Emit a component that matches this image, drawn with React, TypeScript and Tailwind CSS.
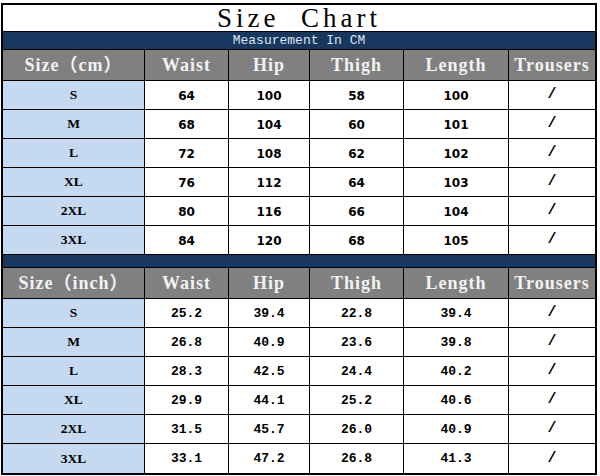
const cmRows = [
  ['S', '64', '100', '58', '100', '/'],
  ['M', '68', '104', '60', '101', '/'],
  ['L', '72', '108', '62', '102', '/'],
  ['XL', '76', '112', '64', '103', '/'],
  ['2XL', '80', '116', '66', '104', '/'],
  ['3XL', '84', '120', '68', '105', '/'],
];

const inchRows = [
  ['S', '25.2', '39.4', '22.8', '39.4', '/'],
  ['M', '26.8', '40.9', '23.6', '39.8', '/'],
  ['L', '28.3', '42.5', '24.4', '40.2', '/'],
  ['XL', '29.9', '44.1', '25.2', '40.6', '/'],
  ['2XL', '31.5', '45.7', '26.0', '40.9', '/'],
  ['3XL', '33.1', '47.2', '26.8', '41.3', '/'],
];

const grid = 'grid grid-cols-[142px_84px_81px_94px_105px_86px]';

const HeaderRow = ({ first }: { first: string }) => {
  const labels = [first, 'Waist', 'Hip', 'Thigh', 'Length', 'Trousers'];
  return (
    <div className={`${grid} h-[31px] border-b border-black bg-[#808080]`}>
      {labels.map((label, i) => (
        <div
          key={i}
          className={`flex items-center justify-center font-['Liberation_Serif','Noto_Sans_CJK_SC',serif] text-[18px] font-bold tracking-[1px] text-[#f2f2f2] leading-none whitespace-nowrap ${
            i < 5 ? 'border-r border-black' : ''
          }`}
        >
          {label}
        </div>
      ))}
    </div>
  );
};

const DataRow = ({ cells, decimal, last }: { cells: string[]; decimal?: boolean; last?: boolean }) => (
  <div className={`${grid} h-[29px] ${last ? '' : 'border-b border-black'}`}>
    {cells.map((c, i) => {
      let font = decimal
        ? "font-['Liberation_Mono',monospace] text-[13px]"
        : "font-['DejaVu_Sans',sans-serif] text-[12px]";
      if (i === 0) font = "font-['Liberation_Serif',serif] text-[13.5px]";
      if (i === 5) font = "font-['Liberation_Mono',monospace] text-[15px]";
      return (
        <div
          key={i}
          className={`flex items-center justify-center pt-[1px] font-bold text-black ${font} ${
            i === 0 ? 'bg-[#c5d9f1]' : 'bg-white'
          } ${i < 5 ? 'border-r border-black' : ''}`}
        >
          {c}
        </div>
      );
    })}
  </div>
);

export default function App() {
  return (
    <div className="w-[600px] h-[476px] bg-white pl-[1px] pt-[3px]">
      <div className="w-[596px] border-2 border-black bg-white">
        <div className="h-[27px] border-b border-black flex items-center justify-center">
          <span className="font-['Liberation_Serif',serif] text-[27px] leading-none tracking-[4px] text-black whitespace-pre">
            Size  Chart
          </span>
        </div>
        <div className="h-[18px] border-b border-black bg-[#17375e] flex items-center justify-center">
          <span className="font-['Liberation_Mono',monospace] text-[13px] leading-none text-[#dce6f1]">
            Measurement In CM
          </span>
        </div>
        <HeaderRow first="Size（cm）" />
        {cmRows.map((r, i) => (
          <DataRow key={i} cells={r} />
        ))}
        <div className="h-[13px] border-b border-black bg-[#17375e]" />
        <HeaderRow first="Size（inch）" />
        {inchRows.map((r, i) => (
          <DataRow key={i} cells={r} decimal last={i === inchRows.length - 1} />
        ))}
      </div>
    </div>
  );
}
